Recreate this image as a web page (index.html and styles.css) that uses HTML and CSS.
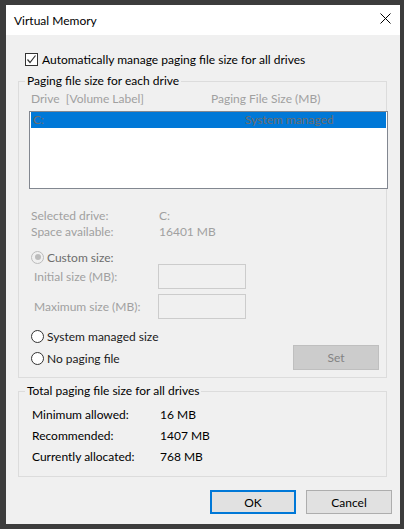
FILE: index.html
```html
<!DOCTYPE html>
<html lang="en">
<head>
    <meta charset="UTF-8" />
    <meta name="viewport" content="width=device-width, initial-scale=1" />
    <title>Virtual Memory</title>
    <link rel="stylesheet" href="styles.css">
</head>
<body>
    <div class="dialog">
        <div class="titlebar">
            <span class="title">Virtual Memory</span>
            <svg class="close" width="11" height="11" viewBox="0 0 11 11">
                <path d="M0.5 0.5 L10.5 10.5 M10.5 0.5 L0.5 10.5" stroke="#000" stroke-width="1" fill="none" />
            </svg>
        </div>

        <div class="content">
            <label class="check">
                <span class="box">
                    <svg width="11" height="11" viewBox="0 0 11 11">
                        <path d="M1.5 5.5 L4 8.5 L9.5 1.5" stroke="#333" stroke-width="1.2" fill="none" />
                    </svg>
                </span>
                Automatically manage paging file size for all drives
            </label>

            <fieldset class="group drives">
                <legend>Paging file size for each drive</legend>
                <div class="list-head">
                    <span>Drive&nbsp; [Volume Label]</span>
                    <span>Paging File Size (MB)</span>
                </div>
                <div class="listbox">
                    <div class="list-row selected">
                        <span>C:</span>
                        <span>System managed</span>
                    </div>
                </div>

                <div class="info">
                    <span>Selected drive:</span><span>C:</span>
                    <span>Space available:</span><span>16401 MB</span>
                </div>

                <div class="radio custom"><span class="dot checked"></span>Custom size:</div>
                <div class="field-row">
                    <span>Initial size (MB):</span>
                    <span class="input"></span>
                </div>
                <div class="field-row">
                    <span>Maximum size (MB):</span>
                    <span class="input"></span>
                </div>

                <div class="set-row">
                    <div class="radios">
                        <div class="radio"><span class="dot"></span>System managed size</div>
                        <div class="radio"><span class="dot"></span>No paging file</div>
                    </div>
                    <button class="btn set" type="button">Set</button>
                </div>
            </fieldset>

            <fieldset class="group totals">
                <legend>Total paging file size for all drives</legend>
                <div class="totals-grid">
                    <span>Minimum allowed:</span><span>16 MB</span>
                    <span>Recommended:</span><span>1407 MB</span>
                    <span>Currently allocated:</span><span>768 MB</span>
                </div>
            </fieldset>

            <div class="actions">
                <button class="btn default" type="button">OK</button>
                <button class="btn" type="button">Cancel</button>
            </div>
        </div>
    </div>
</body>
</html>
```

FILE: styles.css
```css
html, body { margin: 0; }
body {
    height: 529px;
    box-sizing: border-box;
    overflow: hidden;
    padding: 5px 4px 0 6px;
    background: #3c3c3c;
    font-family: Lato, "Noto Sans", sans-serif;
    font-size: 12px;
    color: #000;
}

.dialog { width: 394px; height: 519px; background: #f0f0f0; }

.titlebar {
    height: 30px;
    background: #fff;
    display: flex;
    align-items: center;
    justify-content: space-between;
    padding: 0 9px 0 8px;
}
.title { line-height: 16px; margin-top: 1px; }
.close { display: block; margin-top: -3px; }

.content { padding: 18px 13px 0 12px; }

/* checkbox */
.check { display: flex; align-items: center; height: 13px; margin-left: 7px; gap: 4px; }
.box {
    width: 11px; height: 11px;
    border: 1px solid #333;
    background: #fff;
    display: flex;
}

/* group boxes */
.group {
    margin: 7px 0 0;
    border: 1px solid #dcdcdc;
    padding: 0 0 7px 10px;
    min-width: 0;
}
.group legend { line-height: 16px; padding: 0 2px; margin-left: -4px; }

.list-head {
    display: grid;
    grid-template-columns: 180px 1fr;
    padding-left: 2px;
    margin: 2px 0 4px;
    line-height: 16px;
    color: #a0a0a0;
}

.listbox {
    height: 78px;
    box-sizing: border-box;
    border: 1px solid #828790;
    background: #fff;
    padding: 0 1px;
    margin-right: -2px;
}
.list-row {
    display: grid;
    grid-template-columns: 212px 1fr;
    padding-left: 2px;
    height: 16px;
    line-height: 16px;
}
.list-row.selected { background: #0078d7; color: #6d6d6d; }

.info {
    display: grid;
    grid-template-columns: 128px 1fr;
    padding-left: 2px;
    margin-top: 19px;
    line-height: 16px;
    color: #a0a0a0;
}

/* radio buttons */
.radio { display: flex; align-items: center; height: 14px; gap: 3px; padding-left: 2px; color: #1a1a1a; }
.radio.custom { margin-top: 10px; color: #6d6d6d; }
.dot {
    width: 11px; height: 11px;
    border: 1px solid #333;
    border-radius: 50%;
    background: #fff;
    display: flex;
    align-items: center;
    justify-content: center;
}
.dot.checked { border-color: #bcbcbc; background: #f0f0f0; }
.dot.checked::after {
    content: "";
    width: 6px; height: 6px;
    border-radius: 50%;
    background: #bcbcbc;
}

.field-row {
    display: grid;
    grid-template-columns: 124px 88px;
    align-items: center;
    padding-left: 5px;
    color: #a0a0a0;
}
.field-row + .field-row { margin-top: 5px; }
.input { height: 25px; box-sizing: border-box; border: 1px solid #cccccc; }

.set-row { display: flex; justify-content: space-between; margin-top: 10px; margin-right: 7px; }
.radios { display: flex; flex-direction: column; gap: 8px; }

/* push buttons */
.btn {
    font: inherit;
    height: 24px;
    width: 86px;
    padding: 0;
    border: 1px solid #adadad;
    background: #e1e1e1;
    color: #000;
}
.btn.set {
    height: 25px;
    margin-top: 16px;
    background: #cccccc;
    border-color: #bfbfbf;
    color: #838383;
}
.btn.default { border: 2px solid #0078d7; }

.totals { margin-top: 5px; padding-bottom: 9px; }
.totals-grid {
    display: grid;
    grid-template-columns: 128px 1fr;
    padding-left: 3px;
    margin-top: 5px;
    line-height: 21px;
}

.actions { display: flex; justify-content: flex-end; gap: 10px; margin: 13px -5px 0 0; }
```
